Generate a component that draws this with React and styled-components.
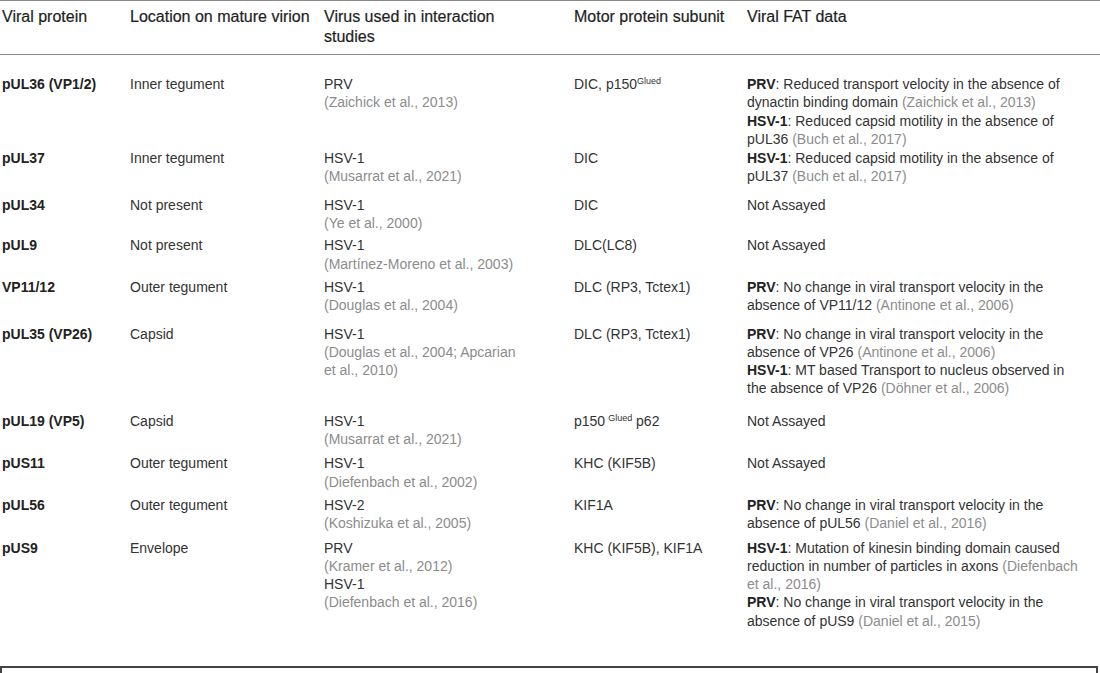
import React from "react";
import styled, { createGlobalStyle } from "styled-components";

const GlobalStyle = createGlobalStyle`
  body {
    margin: 0;
    background: #ffffff;
    font-family: "Liberation Sans", Arial, sans-serif;
    color: #333333;
    overflow: hidden;
  }
`;

const Table = styled.div`
  width: 1100px;
  border-top: 1px solid #8a8a8a;
  font-size: 14px;
`;

const columns = "128px 194px 250px 173px 1fr";

const HeadRow = styled.div`
  display: grid;
  grid-template-columns: ${columns};
  padding: 6px 0 7px 2px;
  font-size: 16px;
  line-height: 20px;
  color: #1e1e1e;
  -webkit-text-stroke: 0.2px #1e1e1e;
  border-bottom: 1px solid #8a8a8a;
`;

const Body = styled.div`
  padding-top: 20px;
  height: 591px;
`;

const Row = styled.div`
  display: grid;
  grid-template-columns: ${columns};
  padding: 0 0 ${({ space }) => space}px 2px;
  line-height: 18.3px;
`;

const Cell = styled.div`
  white-space: nowrap;
`;

const Protein = styled(Cell)`
  font-weight: 700;
  color: #222222;
`;

const Cite = styled.span`
  color: #8c8c8c;
`;

const Virus = styled.strong`
  font-weight: 700;
  color: #222222;
`;

const Sup = styled.sup`
  font-size: 9px;
  line-height: 0;
  vertical-align: 5px;
  margin-left: ${({ gap }) => (gap ? "3px" : "0")};
`;

const Footer = styled.div`
  width: 1094px;
  height: 8px;
  border: 2px solid #444444;
  border-bottom: none;
`;

const rows = [
  {
    protein: "pUL36 (VP1/2)",
    location: "Inner tegument",
    virus: (
      <>
        PRV
        <br />
        <Cite>(Zaichick et al., 2013)</Cite>
      </>
    ),
    motor: (
      <>
        DIC, p150<Sup>Glued</Sup>
      </>
    ),
    fat: (
      <>
        <Virus>PRV</Virus>: Reduced transport velocity in the absence of
        <br />
        dynactin binding domain <Cite>(Zaichick et al., 2013)</Cite>
        <br />
        <Virus>HSV-1</Virus>: Reduced capsid motility in the absence of
        <br />
        pUL36 <Cite>(Buch et al., 2017)</Cite>
      </>
    ),
    space: 1,
  },
  {
    protein: "pUL37",
    location: "Inner tegument",
    virus: (
      <>
        HSV-1
        <br />
        <Cite>(Musarrat et al., 2021)</Cite>
      </>
    ),
    motor: "DIC",
    fat: (
      <>
        <Virus>HSV-1</Virus>: Reduced capsid motility in the absence of
        <br />
        pUL37 <Cite>(Buch et al., 2017)</Cite>
      </>
    ),
    space: 10,
  },
  {
    protein: "pUL34",
    location: "Not present",
    virus: (
      <>
        HSV-1
        <br />
        <Cite>(Ye et al., 2000)</Cite>
      </>
    ),
    motor: "DIC",
    fat: "Not Assayed",
    space: 4,
  },
  {
    protein: "pUL9",
    location: "Not present",
    virus: (
      <>
        HSV-1
        <br />
        <Cite>(Martínez-Moreno et al., 2003)</Cite>
      </>
    ),
    motor: "DLC(LC8)",
    fat: "Not Assayed",
    space: 5,
  },
  {
    protein: "VP11/12",
    location: "Outer tegument",
    virus: (
      <>
        HSV-1
        <br />
        <Cite>(Douglas et al., 2004)</Cite>
      </>
    ),
    motor: "DLC (RP3, Tctex1)",
    fat: (
      <>
        <Virus>PRV</Virus>: No change in viral transport velocity in the
        <br />
        absence of VP11/12 <Cite>(Antinone et al., 2006)</Cite>
      </>
    ),
    space: 10,
  },
  {
    protein: "pUL35 (VP26)",
    location: "Capsid",
    virus: (
      <>
        HSV-1
        <br />
        <Cite>
          (Douglas et al., 2004; Apcarian
          <br />
          et al., 2010)
        </Cite>
      </>
    ),
    motor: "DLC (RP3, Tctex1)",
    fat: (
      <>
        <Virus>PRV</Virus>: No change in viral transport velocity in the
        <br />
        absence of VP26 <Cite>(Antinone et al., 2006)</Cite>
        <br />
        <Virus>HSV-1</Virus>: MT based Transport to nucleus observed in
        <br />
        the absence of VP26 <Cite>(Döhner et al., 2006)</Cite>
      </>
    ),
    space: 14,
  },
  {
    protein: "pUL19 (VP5)",
    location: "Capsid",
    virus: (
      <>
        HSV-1
        <br />
        <Cite>(Musarrat et al., 2021)</Cite>
      </>
    ),
    motor: (
      <>
        p150<Sup gap>Glued</Sup> p62
      </>
    ),
    fat: "Not Assayed",
    space: 6,
  },
  {
    protein: "pUS11",
    location: "Outer tegument",
    virus: (
      <>
        HSV-1
        <br />
        <Cite>(Diefenbach et al., 2002)</Cite>
      </>
    ),
    motor: "KHC (KIF5B)",
    fat: "Not Assayed",
    space: 5,
  },
  {
    protein: "pUL56",
    location: "Outer tegument",
    virus: (
      <>
        HSV-2
        <br />
        <Cite>(Koshizuka et al., 2005)</Cite>
      </>
    ),
    motor: "KIF1A",
    fat: (
      <>
        <Virus>PRV</Virus>: No change in viral transport velocity in the
        <br />
        absence of pUL56 <Cite>(Daniel et al., 2016)</Cite>
      </>
    ),
    space: 6,
  },
  {
    protein: "pUS9",
    location: "Envelope",
    virus: (
      <>
        PRV
        <br />
        <Cite>(Kramer et al., 2012)</Cite>
        <br />
        HSV-1
        <br />
        <Cite>(Diefenbach et al., 2016)</Cite>
      </>
    ),
    motor: "KHC (KIF5B), KIF1A",
    fat: (
      <>
        <Virus>HSV-1</Virus>: Mutation of kinesin binding domain caused
        <br />
        reduction in number of particles in axons <Cite>(Diefenbach</Cite>
        <br />
        <Cite>et al., 2016)</Cite>
        <br />
        <Virus>PRV</Virus>: No change in viral transport velocity in the
        <br />
        absence of pUS9 <Cite>(Daniel et al., 2015)</Cite>
      </>
    ),
    space: 0,
  },
];

export default function App() {
  return (
    <>
      <GlobalStyle />
      <Table>
        <HeadRow>
          <Cell>Viral protein</Cell>
          <Cell>Location on mature virion</Cell>
          <Cell>
            Virus used in interaction
            <br />
            studies
          </Cell>
          <Cell>Motor protein subunit</Cell>
          <Cell>Viral FAT data</Cell>
        </HeadRow>
        <Body>
          {rows.map((row) => (
            <Row key={row.protein} space={row.space}>
              <Protein>{row.protein}</Protein>
              <Cell>{row.location}</Cell>
              <Cell>{row.virus}</Cell>
              <Cell>{row.motor}</Cell>
              <Cell>{row.fat}</Cell>
            </Row>
          ))}
        </Body>
        <Footer />
      </Table>
    </>
  );
}
